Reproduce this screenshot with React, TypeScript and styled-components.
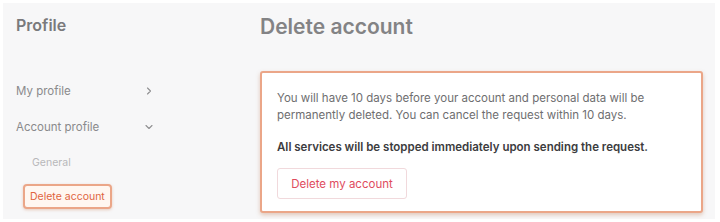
import React from "react";
import styled, { createGlobalStyle } from "styled-components";

const Global = createGlobalStyle`
  html, body { margin: 0; padding: 0; background: #ffffff; }
  body { font-family: Inter, "Noto Sans", sans-serif; -webkit-font-smoothing: antialiased; }
  * { box-sizing: border-box; }
`;

const Frame = styled.div`
  width: 720px;
  height: 222px;
  padding: 3px 5px 3px 3px;
`;

const Shell = styled.div`
  height: 100%;
  background: #f7f7f8;
  display: grid;
  grid-template-columns: 254px 1fr;
`;

const Sidebar = styled.aside`
  display: flex;
  flex-direction: column;
  padding: 13px 0 0 13px;
`;

const SideTitle = styled.h2`
  margin: 0 0 39px;
  font-size: 16px;
  font-weight: 600;
  color: #7a7a7c;
  line-height: 18px;
`;

const NavRow = styled.div`
  display: flex;
  align-items: center;
  justify-content: space-between;
  width: 138px;
  height: 36px;
  font-size: 11.5px;
  color: #8a8a8c;
`;

const SubItem = styled.div`
  height: 34px;
  display: flex;
  align-items: center;
  padding-left: 16px;
  font-size: 10.5px;
  color: #b8b8ba;
`;

const ActiveItem = styled.div`
  margin: 5px 0 0 7px;
  align-self: flex-start;
  height: 25px;
  padding: 0 5px;
  display: flex;
  align-items: center;
  font-size: 10.5px;
  color: #e0643e;
  background: #fff7f1;
  border: 2px solid #eba688;
  border-radius: 4px;
  box-shadow: 0 1px 3px rgba(200, 120, 80, 0.35);
`;

const Main = styled.main`
  display: flex;
  flex-direction: column;
  padding: 11px 0 0 3px;
`;

const PageTitle = styled.h1`
  margin: 0 0 31px;
  font-size: 21px;
  font-weight: 600;
  color: #838385;
  line-height: 26px;
`;

const Card = styled.section`
  width: 443px;
  height: 142px;
  background: #ffffff;
  border: 2px solid #eba688;
  border-radius: 3px;
  box-shadow: 0 2px 4px rgba(180, 110, 70, 0.35);
  padding: 17px 15px 0;
  display: flex;
  flex-direction: column;
`;

const Body = styled.p`
  margin: 0;
  font-size: 11.5px;
  line-height: 17px;
  color: #6e6e70;
`;

const Warning = styled.p`
  margin: 15px 0 0;
  font-size: 11.5px;
  line-height: 17px;
  font-weight: 600;
  color: #3c3c3e;
`;

const DangerButton = styled.button`
  margin-top: 12px;
  align-self: flex-start;
  height: 31px;
  width: 130px;
  background: #ffffff;
  border: 1px solid #f1d9dc;
  border-radius: 3px;
  font-family: inherit;
  font-size: 11.5px;
  color: #e04b5e;
  cursor: pointer;
`;

const Chevron = ({ dir }: { dir: "right" | "down" }) => (
  <svg width="10" height="10" viewBox="0 0 10 10" fill="none" stroke="#8f8f91" strokeWidth="1.1" strokeLinecap="round" strokeLinejoin="round">
    {dir === "right" ? <path d="M3.5 2 L6.5 5 L3.5 8" /> : <path d="M2 3.5 L5 6.5 L8 3.5" />}
  </svg>
);

export default function App() {
  return (
    <>
      <Global />
      <Frame>
        <Shell>
          <Sidebar>
            <SideTitle>Profile</SideTitle>
            <NavRow>
              <span>My profile</span>
              <Chevron dir="right" />
            </NavRow>
            <NavRow>
              <span>Account profile</span>
              <Chevron dir="down" />
            </NavRow>
            <SubItem>General</SubItem>
            <ActiveItem>Delete account</ActiveItem>
          </Sidebar>
          <Main>
            <PageTitle>Delete account</PageTitle>
            <Card>
              <Body>
                You will have 10 days before your account and personal data will be
                <br />
                permanently deleted. You can cancel the request within 10 days.
              </Body>
              <Warning>All services will be stopped immediately upon sending the request.</Warning>
              <DangerButton>Delete my account</DangerButton>
            </Card>
          </Main>
        </Shell>
      </Frame>
    </>
  );
}
